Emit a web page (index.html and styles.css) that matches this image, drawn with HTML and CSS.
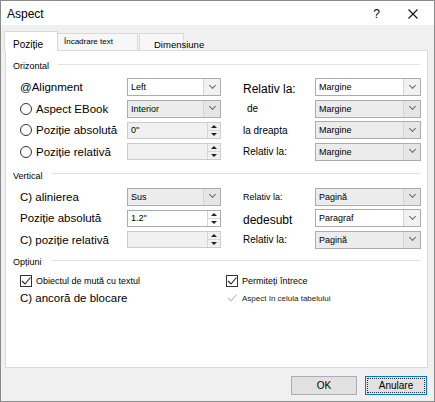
FILE: index.html
```html
<!DOCTYPE html>
<html>
<head>
  <title>Aspect</title>
  <link rel="stylesheet" href="styles.css">
</head>
<body>

<div class="dialog">
  <div class="titlebar">
    <span class="title">Aspect</span>
    <span class="help">?</span>
    <svg class="close" width="10" height="10" viewBox="0 0 10 10"><path d="M0.5 0.5 L9.5 9.5 M9.5 0.5 L0.5 9.5" stroke="#111" stroke-width="1.1" fill="none"/></svg>
  </div>

  <div class="content">
    <div class="tabs">
      <div class="tab active">Poziție</div>
      <div class="tab tab-wrap">Încadrare text</div>
      <div class="tab tab-size">Dimensiune</div>
    </div>

    <div class="panel">
      <div class="legend">Orizontal</div>
      <div class="rows">
        <div class="lbl">@Alignment</div>
        <div class="sel white"><span class="val">Left</span><span class="drop"></span></div>
        <div class="lbl2 big">Relativ la:</div>
        <div class="sel white"><span class="val">Margine</span><span class="drop"></span></div>

        <div class="lbl"><span class="radio"></span>Aspect EBook</div>
        <div class="sel"><span class="val">Interior</span><span class="drop"></span></div>
        <div class="lbl2 de">de</div>
        <div class="sel"><span class="val">Margine</span><span class="drop"></span></div>

        <div class="lbl"><span class="radio"></span>Poziție absolută</div>
        <div class="spin off"><span class="val">0"</span><span class="arrows"><i class="up"></i><i class="down"></i></span></div>
        <div class="lbl2">la dreapta</div>
        <div class="sel"><span class="val">Margine</span><span class="drop"></span></div>

        <div class="lbl"><span class="radio"></span>Poziție relativă</div>
        <div class="spin off"><span class="val"></span><span class="arrows"><i class="up"></i><i class="down"></i></span></div>
        <div class="lbl2">Relativ la:</div>
        <div class="sel"><span class="val">Margine</span><span class="drop"></span></div>
      </div>

      <div class="legend vert">Vertical</div>
      <div class="rows">
        <div class="lbl">C) alinierea</div>
        <div class="sel"><span class="val">Sus</span><span class="drop"></span></div>
        <div class="lbl2 tiny">Relativ la:</div>
        <div class="sel"><span class="val">Pagină</span><span class="drop"></span></div>

        <div class="lbl">Poziție absolută</div>
        <div class="spin"><span class="val">1.2"</span><span class="arrows"><i class="up"></i><i class="down"></i></span></div>
        <div class="lbl2 big">dedesubt</div>
        <div class="sel white"><span class="val">Paragraf</span><span class="drop"></span></div>

        <div class="lbl">C) poziție relativă</div>
        <div class="spin off"><span class="val"></span><span class="arrows"><i class="up"></i><i class="down"></i></span></div>
        <div class="lbl2">Relativ la:</div>
        <div class="sel"><span class="val">Pagină</span><span class="drop"></span></div>
      </div>

      <div class="legend opts">Opțiuni</div>
      <div class="options">
        <div class="opt"><span class="check"><svg width="10" height="10" viewBox="0 0 10 10"><path d="M1 5 L4 8 L9.5 1.5" stroke="#222" stroke-width="1.1" fill="none"/></svg></span>Obiectul de mută cu textul</div>
        <div class="opt"><span class="check"><svg width="10" height="10" viewBox="0 0 10 10"><path d="M1 5 L4 8 L9.5 1.5" stroke="#222" stroke-width="1.1" fill="none"/></svg></span>Permiteți întrece</div>
        <div class="opt anchor">C) ancoră de blocare</div>
        <div class="opt disabled"><span class="check"><svg width="10" height="10" viewBox="0 0 10 10"><path d="M1 5 L4 8 L9.5 1.5" stroke="#bdbdbd" stroke-width="1.1" fill="none"/></svg></span>Aspect în celula tabelului</div>
      </div>
    </div>

    <div class="footer">
      <div class="btn">OK</div>
      <div class="btn focus">Anulare</div>
    </div>
  </div>
</div>

</body>
</html>
```

FILE: styles.css
```css
body {
  margin: 0;
  font-family: "Liberation Sans", Arial, sans-serif;
  color: #000;
}
.dialog {
  width: 435px;
  height: 402px;
  box-sizing: border-box;
  border: 1px solid #8a8a8a;
  background: #f0f0f0;
  display: flex;
  flex-direction: column;
}

/* title bar */
.titlebar {
  height: 24px;
  background: #fff;
  display: flex;
  align-items: center;
  padding: 1px 16px 0 6px;
  box-sizing: border-box;
  font-size: 12px;
}
.title {
  flex: 1;
}
.help {
  font-size: 12px;
  margin-right: 28px;
}

.content {
  flex: 1;
  display: flex;
  flex-direction: column;
  padding: 0 6px 0 3px;
}

/* tabs */
.tabs {
  height: 25px;
  display: flex;
  align-items: flex-end;
}
.tab {
  box-sizing: border-box;
  height: 17px;
  border: 1px solid #d9d9d9;
  border-bottom: none;
  background: #f7f7f7;
  white-space: nowrap;
  line-height: 12px;
}
.tab.active {
  width: 54px;
  height: 20px;
  margin-bottom: -1px;
  background: #fff;
  position: relative;
  z-index: 1;
  font-size: 10px;
  padding: 7px 0 0 8px;
}
.tab-wrap {
  width: 80px;
  font-size: 8px;
  padding: 2px 0 0 6px;
  border-left: none;
}
.tab-size {
  width: 45px;
  margin-left: 1px;
  font-size: 9.5px;
  padding: 5px 0 0 14px;
  overflow: visible;
}

/* white page */
.panel {
  height: 318px;
  box-sizing: border-box;
  margin-left: 1px;
  background: #fff;
  border: 1px solid #dadada;
  padding: 8px 7px 0 7px;
}
.legend {
  display: flex;
  align-items: center;
  height: 14px;
  font-size: 9px;
}
.legend::after {
  content: "";
  flex: 1;
  margin-left: 9px;
  border-top: 1px solid #e1e1e1;
  transform: translateY(-2px);
}
.legend.vert {
  margin-top: 8px;
}
.legend.opts {
  margin-top: 6.5px;
}

.rows {
  display: grid;
  grid-template-columns: 108px 94px 94px 106px;
  grid-auto-rows: 18px;
  row-gap: 3.5px;
  align-items: center;
  margin: 5px 0 0 6px;
}
.lbl {
  display: flex;
  align-items: center;
  font-size: 11.5px;
  padding-left: 1px;
  white-space: nowrap;
}
.radio {
  width: 12px;
  height: 12px;
  box-sizing: border-box;
  border: 1px solid #333;
  border-radius: 50%;
  margin-right: 4px;
}
.lbl2 {
  font-size: 10px;
  padding-left: 22px;
  white-space: nowrap;
}
.lbl2.big {
  font-size: 12px;
  padding-top: 3px;
}
.lbl2.de {
  padding-left: 26px;
}
.lbl2.tiny {
  font-size: 9px;
}

/* combo boxes */
.sel {
  height: 18px;
  box-sizing: border-box;
  border: 1px solid #acacac;
  background: #ececec;
  display: flex;
}
.sel.white {
  background: #fff;
}
.val {
  flex: 1;
  font-size: 9px;
  line-height: 16px;
  padding-left: 3px;
}
.drop {
  width: 16px;
  border-left: 1px solid #d4d4d4;
  background: #e6e6e6;
  display: flex;
  align-items: center;
  justify-content: center;
}
.sel.white .drop {
  background: #f2f2f2;
}
.drop::before {
  content: "";
  width: 4px;
  height: 4px;
  border-right: 1px solid #666;
  border-bottom: 1px solid #666;
  transform: translateY(-2px) rotate(45deg);
}

/* spin boxes */
.spin {
  height: 17px;
  box-sizing: border-box;
  border: 1px solid #acacac;
  background: #fff;
  display: flex;
}
.spin.off {
  background: #f0f0f0;
  border-color: #cccccc;
}
.spin .val {
  line-height: 15px;
}
.arrows {
  width: 12px;
  border-left: 1px solid #d6d6d6;
  display: flex;
  flex-direction: column;
}
.arrows i {
  flex: 1;
  display: flex;
  align-items: center;
  justify-content: center;
}
.arrows .up {
  border-bottom: 1px solid #d6d6d6;
}
.arrows .up::before {
  content: "";
  border-left: 3px solid transparent;
  border-right: 3px solid transparent;
  border-bottom: 3px solid #222;
}
.arrows .down::before {
  content: "";
  border-left: 3px solid transparent;
  border-right: 3px solid transparent;
  border-top: 3px solid #222;
}

/* check boxes */
.options {
  display: grid;
  grid-template-columns: 206px 1fr;
  grid-auto-rows: 14px;
  row-gap: 3px;
  margin: 5px 0 0 7px;
  align-items: center;
}
.opt {
  display: flex;
  align-items: center;
  font-size: 9px;
  white-space: nowrap;
}
.opt.anchor {
  font-size: 11.5px;
}
.opt.disabled {
  font-size: 8px;
  color: #222;
}
.check {
  width: 12px;
  height: 12px;
  box-sizing: border-box;
  border: 1px solid #333;
  margin-right: 4px;
  display: flex;
  align-items: center;
  justify-content: center;
}
.opt.disabled .check {
  border-color: transparent;
}

/* buttons */
.footer {
  display: flex;
  justify-content: flex-end;
  gap: 8px;
  padding: 8px 1px 0 0;
}
.btn {
  width: 66px;
  height: 19px;
  box-sizing: border-box;
  border: 1px solid #adadad;
  background: #e1e1e1;
  font-size: 10px;
  display: flex;
  align-items: center;
  justify-content: center;
}
.btn.focus {
  width: 62px;
  border-color: #0078d7;
  outline: 1px dotted #333;
  outline-offset: -3px;
}
```
